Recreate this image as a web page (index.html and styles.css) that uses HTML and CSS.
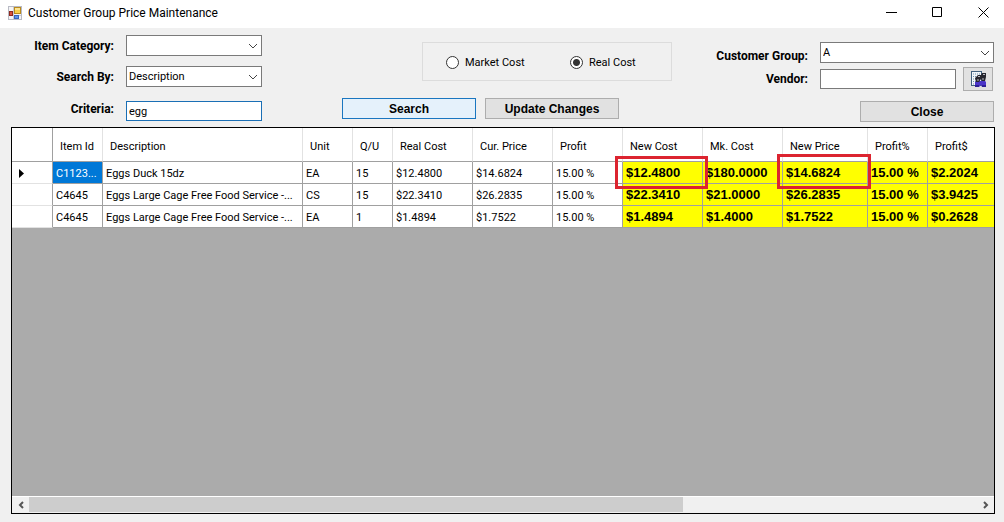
FILE: index.html
```html
<!DOCTYPE html>
<html lang="en">
<head>
    <meta charset="UTF-8">
    <meta name="viewport" content="width=device-width, initial-scale=1.0">
    <title>Customer Group Price Maintenance</title>

    <link rel="stylesheet" href="styles.css">
</head>

<body>

    <header class="title-bar">
        <svg class="app-icon" width="14" height="14" viewBox="0 0 14 14" aria-hidden="true">
            <rect x="0.5" y="0.5" width="13" height="13" fill="#f4f4f6" stroke="#b8bac4" />
            <path d="M5.5 1v12M1 9.5h12" stroke="#c9cbd4" fill="none" />
            <rect x="6.5" y="1.5" width="6" height="6" fill="#f8cf48" stroke="#b98a1d" />
            <rect x="7" y="2" width="5" height="2" fill="#fde490" />
            <rect x="1.5" y="5.5" width="3" height="4" fill="#d8503c" stroke="#8e2a20" />
            <rect x="6.5" y="9.5" width="4" height="3" fill="#5c93ea" stroke="#3866bc" />
        </svg>
        <h1>Customer Group Price Maintenance</h1>
        <div class="window-buttons">
            <button type="button" aria-label="Minimize">
                <svg width="11" height="11" viewBox="0 0 11 11"><path d="M0 5.5h11" /></svg>
            </button>
            <button type="button" aria-label="Maximize">
                <svg width="11" height="11" viewBox="0 0 11 11"><path d="M0.5 0.5h9v9h-9z" /></svg>
            </button>
            <button type="button" aria-label="Close window">
                <svg width="11" height="11" viewBox="0 0 11 11"><path d="M0.5 0.5l10 10M10.5 0.5l-10 10" /></svg>
            </button>
        </div>
    </header>

    <main>
        <form class="toolbar">
            <div class="filters">
                <label for="itemCategory">Item Category:</label>
                <div class="select-box">
                    <select id="itemCategory">
                        <option></option>
                    </select>
                    <svg width="10" height="6" viewBox="0 0 10 6"><path d="M1 1l4 4 4-4" /></svg>
                </div>
                <label for="searchBy">Search By:</label>
                <div class="select-box">
                    <select id="searchBy">
                        <option>Description</option>
                    </select>
                    <svg width="10" height="6" viewBox="0 0 10 6"><path d="M1 1l4 4 4-4" /></svg>
                </div>
                <label for="criteria">Criteria:</label>
                <input class="text-box active" type="text" id="criteria" value="egg">
            </div>

            <div class="actions">
                <div class="cost-type">
                    <label><input type="radio" name="costType">Market Cost</label>
                    <label><input type="radio" name="costType" checked>Real Cost</label>
                </div>
                <div class="action-buttons">
                    <button class="btn btn-default" type="button">Search</button>
                    <button class="btn" type="button">Update Changes</button>
                </div>
            </div>

            <div class="customer">
                <label for="customerGroup">Customer Group:</label>
                <div class="select-box">
                    <select id="customerGroup">
                        <option>A</option>
                    </select>
                    <svg width="10" height="6" viewBox="0 0 10 6"><path d="M1 1l4 4 4-4" /></svg>
                </div>
                <label for="vendor">Vendor:</label>
                <div class="vendor-row">
                    <input class="text-box" type="text" id="vendor">
                    <button class="btn lookup" type="button" aria-label="Find vendor">
                        <svg width="17" height="17" viewBox="0 0 17 17">
                            <rect x="1.5" y="0.5" width="10" height="14" fill="#f2f6fa" stroke="#41617f" />
                            <path d="M3 3h7M3 5.5h7M3 8h4M3 10.5h3M3 13h2" stroke="#6d8fae" stroke-dasharray="1 1" />
                            <path d="M5 11l3-1h7l1 1v5h-4l-1-2-2 2H5z" fill="#4b35c8" />
                            <path d="M5 14h4v2H5zM12 14h4v2h-4z" fill="#2e1f96" />
                            <path d="M5 7l3-3h3l1-2h4v4l-1 4h-3l-1-2-2 3H6z" fill="#26262e" />
                            <path d="M8 5.5h2M13 3.5h2M7 9h2M12 8h2" stroke="#b9bac2" />
                        </svg>
                    </button>
                </div>
                <button class="btn close" type="button">Close</button>
            </div>
        </form>

        <section class="grid">
            <div class="grid-body">
                <table>
                    <colgroup>
                        <col class="c-marker">
                        <col class="c-id">
                        <col class="c-description">
                        <col class="c-id">
                        <col class="c-qty">
                        <col class="c-price">
                        <col class="c-price">
                        <col class="c-profit">
                        <col class="c-price">
                        <col class="c-price">
                        <col class="c-new-price">
                        <col class="c-percent">
                        <col>
                    </colgroup>
                    <thead>
                        <tr>
                            <th></th>
                            <th>Item Id</th>
                            <th>Description</th>
                            <th>Unit</th>
                            <th>Q/U</th>
                            <th>Real Cost</th>
                            <th>Cur. Price</th>
                            <th>Profit</th>
                            <th>New Cost</th>
                            <th>Mk. Cost</th>
                            <th>New Price</th>
                            <th>Profit%</th>
                            <th>Profit$</th>
                        </tr>
                    </thead>
                    <tbody>
                        <tr>
                            <td class="marker"><svg width="5" height="9" viewBox="0 0 5 9"><path d="M0 0l5 4.5-5 4.5z" /></svg></td>
                            <td class="selected">C1123...</td>
                            <td>Eggs Duck 15dz</td>
                            <td>EA</td>
                            <td>15</td>
                            <td>$12.4800</td>
                            <td>$14.6824</td>
                            <td>15.00 %</td>
                            <td class="new">$12.4800<span class="highlight"></span></td>
                            <td class="new">$180.0000</td>
                            <td class="new">$14.6824<span class="highlight highlight-price"></span></td>
                            <td class="new">15.00 %</td>
                            <td class="new">$2.2024</td>
                        </tr>
                        <tr>
                            <td class="marker"></td>
                            <td>C4645</td>
                            <td>Eggs Large Cage Free Food Service -...</td>
                            <td>CS</td>
                            <td>15</td>
                            <td>$22.3410</td>
                            <td>$26.2835</td>
                            <td>15.00 %</td>
                            <td class="new">$22.3410</td>
                            <td class="new">$21.0000</td>
                            <td class="new">$26.2835</td>
                            <td class="new">15.00 %</td>
                            <td class="new">$3.9425</td>
                        </tr>
                        <tr>
                            <td class="marker"></td>
                            <td>C4645</td>
                            <td>Eggs Large Cage Free Food Service -...</td>
                            <td>EA</td>
                            <td>1</td>
                            <td>$1.4894</td>
                            <td>$1.7522</td>
                            <td>15.00 %</td>
                            <td class="new">$1.4894</td>
                            <td class="new">$1.4000</td>
                            <td class="new">$1.7522</td>
                            <td class="new">15.00 %</td>
                            <td class="new">$0.2628</td>
                        </tr>
                    </tbody>
                </table>
            </div>
            <div class="scroll-bar">
                <button type="button" aria-label="Scroll left">
                    <svg width="6" height="8" viewBox="0 0 6 8"><path d="M5 1L2 4l3 3" /></svg>
                </button>
                <div class="track"><div class="thumb"></div></div>
                <button type="button" aria-label="Scroll right">
                    <svg width="6" height="8" viewBox="0 0 6 8"><path d="M1 1l3 3-3 3" /></svg>
                </button>
            </div>
        </section>
    </main>

</body>
</html>
```

FILE: styles.css
```css
* {
    margin: 0;
    padding: 0;
    box-sizing: border-box;
}

body {
    display: flex;
    flex-direction: column;
    min-height: 100vh;
    background: #f0f0f0;
    color: #000;
    font-family: Roboto, Arial, sans-serif;
    font-size: 11px;
}

button,
input,
select {
    font: inherit;
    color: inherit;
}

svg {
    display: block;
    fill: none;
}

/* title bar */
.title-bar {
    display: flex;
    align-items: center;
    height: 28px;
    padding-left: 8px;
    padding-bottom: 3px;
    background: #fff;
}

.title-bar h1 {
    flex: 1;
    margin-left: 6px;
    font-size: 12px;
    font-weight: normal;
}

.window-buttons {
    display: flex;
    gap: 5px;
}

.window-buttons button {
    display: flex;
    justify-content: center;
    width: 41px;
    border: none;
    background: none;
}

.window-buttons svg {
    stroke: #000;
}

main {
    flex: 1;
    display: flex;
    flex-direction: column;
    padding: 0 9px 8px 11px;
}

/* search options */
.toolbar {
    display: flex;
    justify-content: space-between;
    height: 99px;
}

.filters,
.customer {
    display: grid;
    align-content: start;
    align-items: center;
    column-gap: 12px;
}

.filters {
    grid-template-columns: 103px 136px;
    row-gap: 10px;
    padding-top: 7px;
}

.customer {
    grid-template-columns: 96px 174px;
    row-gap: 4px;
    padding-top: 14px;
    padding-right: 1px;
}

.filters > label,
.customer > label {
    justify-self: end;
    font-size: 12px;
    font-weight: bold;
    white-space: nowrap;
}

.customer > label:first-child {
    align-self: end;
}

.select-box {
    position: relative;
}

.select-box select {
    display: block;
    width: 100%;
    height: 21px;
    padding: 0 20px 0 2px;
    border: 1px solid #7a7a7a;
    border-radius: 0;
    background: #fff;
    appearance: none;
}

.select-box svg {
    position: absolute;
    top: 8px;
    right: 4px;
    stroke: #444;
    pointer-events: none;
}

.text-box {
    width: 100%;
    height: 20px;
    padding: 0 2px;
    border: 1px solid #7a7a7a;
    background: #fff;
}

.text-box.active {
    margin-top: 4px;
    border-color: #1a6fb5;
}

.btn {
    height: 21px;
    border: 1px solid #adadad;
    background: #e1e1e1;
    font-family: 'Liberation Sans', Arial, sans-serif;
    font-size: 12px;
    font-weight: bold;
}

.btn-default {
    border-color: #1a76c0;
    background: #e5f1fb;
}

.actions {
    width: 330px;
    margin-left: 40px;
    padding-top: 14px;
}

.cost-type {
    display: flex;
    align-items: center;
    width: 250px;
    height: 39px;
    margin-left: auto;
    padding: 2px 0 0 23px;
    border: 1px solid #dcdcdc;
}

.cost-type label {
    flex: none;
    display: flex;
    align-items: center;
    gap: 6px;
    width: 124px;
}

.cost-type label:last-child {
    width: auto;
}

.cost-type input {
    width: 13px;
    height: 13px;
    border: 1px solid #333;
    border-radius: 50%;
    background: #fff;
    appearance: none;
}

.cost-type input:checked {
    background: radial-gradient(circle, #333 0 3px, #fff 4px);
}

.action-buttons {
    display: flex;
    gap: 9px;
    margin-top: 17px;
}

.action-buttons .btn {
    width: 134px;
}

.vendor-row {
    display: flex;
    align-items: center;
    gap: 7px;
    padding-right: 1px;
}

.vendor-row .text-box {
    flex: 1;
    min-width: 0;
}

.lookup {
    display: flex;
    align-items: center;
    justify-content: center;
    width: 30px;
    height: 24px;
}

.close {
    grid-column: 2;
    justify-self: end;
    width: 134px;
    margin-top: 6px;
}

/* price grid */
.grid {
    flex: 1;
    display: flex;
    flex-direction: column;
    border: 1px solid #000;
    background: #ababab;
}

.grid-body {
    flex: 1;
}

table {
    width: 100%;
    table-layout: fixed;
    border-collapse: separate;
    border-spacing: 0;
    background: #fff;
}

.c-marker { width: 41px; }
.c-id { width: 50px; }
.c-description { width: 200px; }
.c-qty { width: 40px; }
.c-price { width: 80px; }
.c-profit { width: 70px; }
.c-new-price { width: 85px; }
.c-percent { width: 60px; }

th {
    height: 34px;
    padding: 3px 0 0 7px;
    border-right: 1px solid #e2e2e2;
    border-bottom: 1px solid #a0a0a0;
    text-align: left;
    font-weight: normal;
    white-space: nowrap;
}

td {
    position: relative;
    height: 22px;
    padding: 1px 0 0 3px;
    border-right: 1px solid #a0a0a0;
    border-bottom: 1px solid #a0a0a0;
    white-space: nowrap;
}

th:first-child {
    border-right-color: #a0a0a0;
}

th:last-child,
td:last-child {
    border-right: none;
}

.marker {
    padding-left: 7px;
    border-bottom-color: #e2e2e2;
}

.marker path {
    fill: #000;
}

.selected {
    background: #0078d7;
    color: #fff;
}

.new {
    padding-top: 0;
    background: #ff0;
    font-family: 'Liberation Sans', Arial, sans-serif;
    font-size: 13px;
    font-weight: bold;
}

.highlight {
    position: absolute;
    z-index: 1;
    top: -6px;
    right: -6px;
    bottom: -6px;
    left: -8px;
    border: 3px solid #dc2430;
}

.highlight-price {
    top: -8px;
    right: -4px;
    left: -6px;
}

.scroll-bar {
    display: flex;
    height: 17px;
    border-top: 1px solid #fff;
    background: #f0f0f0;
}

.scroll-bar button {
    display: flex;
    align-items: center;
    justify-content: center;
    width: 17px;
    border: none;
    background: none;
}

.scroll-bar svg {
    stroke: #555;
    stroke-width: 2;
}

.track {
    flex: 1;
}

.thumb {
    width: 69%;
    height: 15px;
    background: #cdcdcd;
}
```
